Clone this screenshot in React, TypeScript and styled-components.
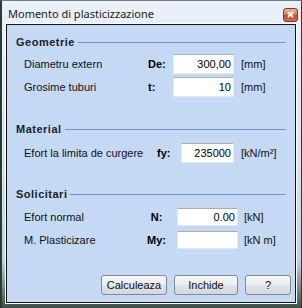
import styled, { createGlobalStyle } from 'styled-components';

const GlobalStyle = createGlobalStyle`
  html, body {
    margin: 0;
    padding: 0;
    background: #3c4e46;
  }
  body {
    font-family: "Liberation Sans", Arial, sans-serif;
    font-size: 11px;
    color: #000;
  }
`;

const Window = styled.div`
  width: 302px;
  height: 308px;
  box-sizing: border-box;
  display: flex;
  flex-direction: column;
  border-left: 2px solid #2c3934;
  border-right: 1px solid #2c3934;
  border-top: 1px solid #6f7d89;
  background: linear-gradient(
    to bottom,
    #ebf1f9 0%,
    #d9e5f2 50%,
    #c2d1e1 85%,
    #6b7c78 95%,
    #3d4f47 100%
  );
`;

const TitleBar = styled.div`
  height: 23px;
  display: flex;
  align-items: center;
  justify-content: space-between;
  padding: 0 3px 0 6px;
`;

const Title = styled.span`
  font-family: "Noto Sans", "Open Sans", sans-serif;
  font-size: 11px;
  color: #1b1b1b;
  margin-top: 1px;
`;

const CloseButton = styled.div`
  width: 15px;
  height: 14px;
  box-sizing: border-box;
  margin-top: 4px;
  border: 1px solid #7a3a2a;
  border-radius: 3px;
  background: linear-gradient(to bottom, #eab5a2 0%, #d97a5f 45%, #c34a2c 55%, #d4714f 100%);
  display: flex;
  align-items: center;
  justify-content: center;
`;

const Panel = styled.div`
  margin: 0 5px 0 4px;
  height: 279px;
  box-sizing: border-box;
  border: 1px solid #141414;
  box-shadow: 0 0 0 1px #ffffff;
  background: #c5d9f5;
  display: flex;
  flex-direction: column;
  padding: 10px 4px 7px 9px;
`;

const Section = styled.div<{ $top: number }>`
  display: flex;
  flex-direction: column;
  margin-top: ${(p) => p.$top}px;
  padding-right: 5px;
`;

const Header = styled.div<{ $gap: number }>`
  height: 14px;
  display: flex;
  align-items: center;
  margin-bottom: ${(p) => p.$gap}px;
`;

const HeaderText = styled.span`
  font-weight: bold;
  font-size: 11px;
  letter-spacing: 0.5px;
  color: #1e2226;
`;

const HeaderLine = styled.div`
  flex: 1;
  height: 1px;
  margin-left: 3px;
  background: #7193c0;
`;

const Rows = styled.div<{ $gap: number }>`
  display: flex;
  flex-direction: column;
  gap: ${(p) => p.$gap}px;
`;

const Row = styled.div<{ $cols: string; $h: number }>`
  display: grid;
  grid-template-columns: ${(p) => p.$cols};
  align-items: center;
  height: ${(p) => p.$h}px;
  padding-left: 8px;
`;

const Label = styled.span`
  white-space: nowrap;
  color: #111;
`;

const Symbol = styled.span<{ $center?: boolean }>`
  font-weight: bold;
  text-align: ${(p) => (p.$center ? 'center' : 'left')};
  padding-right: ${(p) => (p.$center ? '10px' : '0')};
`;

const Field = styled.input`
  box-sizing: border-box;
  width: 100%;
  height: 100%;
  margin: 0;
  border: 1px solid #e3e9ef;
  border-top-color: #abadb3;
  background: #fff;
  text-align: right;
  padding: 0 2px 0 2px;
  font-family: "Liberation Sans", Arial, sans-serif;
  font-size: 11px;
  color: #000;
  outline: none;
`;

const Unit = styled.span<{ $pad: number }>`
  padding-left: ${(p) => p.$pad}px;
  white-space: nowrap;
  color: #111;
`;

const ButtonBar = styled.div`
  margin-top: auto;
  display: flex;
  justify-content: flex-end;
  gap: 7px;
`;

const Button = styled.button<{ $w: number }>`
  width: ${(p) => p.$w}px;
  height: 20px;
  box-sizing: border-box;
  border: 1px solid #858a90;
  border-radius: 3px;
  background: linear-gradient(to bottom, #f5f6f8 0%, #eceef1 48%, #dfe2e7 52%, #d3d7dd 100%);
  font-family: "Liberation Sans", Arial, sans-serif;
  font-size: 11px;
  color: #111;
  padding: 0;
`;

type Line = { label: string; sym: string; value: string; unit: string };

const geometrie: Line[] = [
  { label: 'Diametru extern', sym: 'De:', value: '300,00', unit: '[mm]' },
  { label: 'Grosime tuburi', sym: 't:', value: '10', unit: '[mm]' },
];

const material: Line[] = [
  { label: 'Efort la limita de curgere', sym: 'fy:', value: '235000', unit: '[kN/m²]' },
];

const solicitari: Line[] = [
  { label: 'Efort normal', sym: 'N:', value: '0.00', unit: '[kN]' },
  { label: 'M. Plasticizare', sym: 'My:', value: '', unit: '[kN m]' },
];

type SectionProps = {
  title: string;
  lines: Line[];
  top: number;
  headGap: number;
  cols: string;
  rowH: number;
  rowGap: number;
  unitPad: number;
  center?: boolean;
};

const FormSection = (props: SectionProps) => (
  <Section $top={props.top}>
    <Header $gap={props.headGap}>
      <HeaderText>{props.title}</HeaderText>
      <HeaderLine />
    </Header>
    <Rows $gap={props.rowGap}>
      {props.lines.map((l) => (
        <Row key={l.label} $cols={props.cols} $h={props.rowH}>
          <Label>{l.label}</Label>
          <Symbol $center={props.center}>{l.sym}</Symbol>
          <Field readOnly defaultValue={l.value} />
          <Unit $pad={props.unitPad}>{l.unit}</Unit>
        </Row>
      ))}
    </Rows>
  </Section>
);

export default function App() {
  return (
    <>
      <GlobalStyle />
      <Window>
        <TitleBar>
          <Title>Momento di plasticizzazione</Title>
          <CloseButton>
            <svg width="7" height="7" viewBox="0 0 7 7">
              <path d="M1 1 L6 6 M6 1 L1 6" stroke="#fff" strokeWidth="1.8" />
            </svg>
          </CloseButton>
        </TitleBar>
        <Panel>
          <FormSection
            title="Geometrie"
            lines={geometrie}
            top={0}
            headGap={5}
            cols="124px 25px 61px auto"
            rowH={20}
            rowGap={3}
            unitPad={7}
          />
          <FormSection
            title="Material"
            lines={material}
            top={25}
            headGap={7}
            cols="133px 24px 53px auto"
            rowH={20}
            rowGap={3}
            unitPad={7}
          />
          <FormSection
            title="Solicitari"
            lines={solicitari}
            top={24}
            headGap={7}
            cols="122px 31px 61px auto"
            rowH={18}
            rowGap={5}
            unitPad={6}
            center
          />
          <ButtonBar>
            <Button $w={66}>Calculeaza</Button>
            <Button $w={64}>Inchide</Button>
            <Button $w={46}>?</Button>
          </ButtonBar>
        </Panel>
      </Window>
    </>
  );
}
